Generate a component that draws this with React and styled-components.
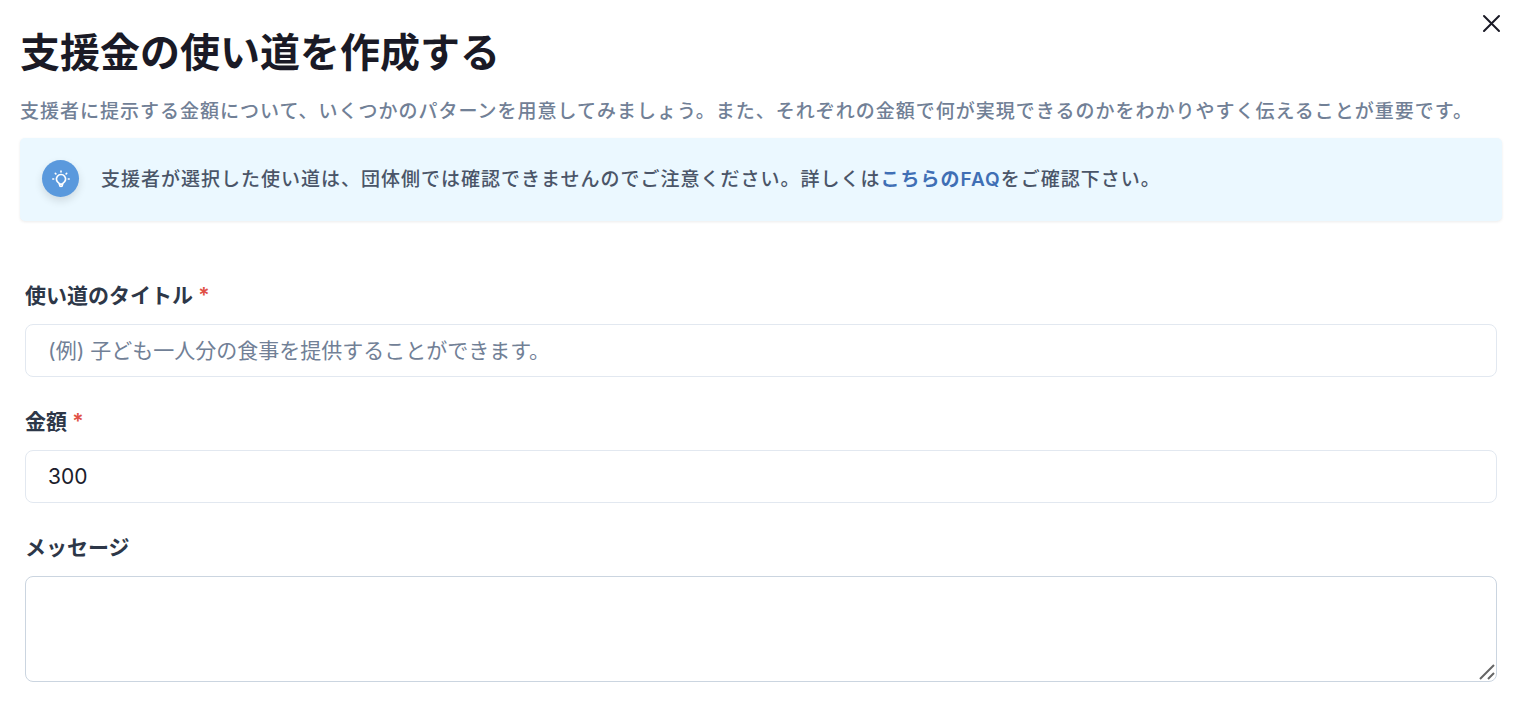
import React, { useState } from 'react';
import styled, { createGlobalStyle } from 'styled-components';

const GlobalStyle = createGlobalStyle`
  *, *::before, *::after {
    box-sizing: border-box;
  }

  body {
    margin: 0;
    background-color: #fff;
    color: #1a202c;
    font-family: Inter, "Noto Sans CJK JP", sans-serif;
  }

  input, textarea, button {
    font-family: inherit;
  }
`

function BulbIcon() {
    return (
        <svg width="20" height="20" viewBox="0 0 24 24" fill="none" stroke="currentColor" strokeWidth="2" strokeLinecap="round" strokeLinejoin="round" aria-hidden="true">
            <path d="M12 2.6v1M5.2 5.2l.6.6M18.8 5.2l-.6.6M2.2 12h1M20.8 12h1" />
            <path d="M9.6 17a5.5 5.5 0 1 1 4.8 0c-.5.6-.7 1.2-.7 2.2a1.7 1.7 0 0 1-3.4 0c0-1-.2-1.6-.7-2.2z" />
            <path d="M10.3 18.2h3.4" />
        </svg>
    )
}

function CloseIcon() {
    return (
        <svg width="19" height="19" viewBox="0 0 19 19" fill="none" stroke="currentColor" strokeWidth="2" strokeLinecap="round" aria-hidden="true">
            <path d="M2 2l15 15M17 2L2 17" />
        </svg>
    )
}

function Field({ id, label, required, children }) {
    return (
        <FieldGroup>
            <Label htmlFor={id}>
                {label}
                {required && <Required> *</Required>}
            </Label>
            {children}
        </FieldGroup>
    )
}

function App() {
    const [title, setTitle] = useState('');
    const [amount, setAmount] = useState('300');
    const [message, setMessage] = useState('');

    return (
        <>
            <GlobalStyle />
            <Page>
                <Header>
                    <Title>支援金の使い道を作成する</Title>
                    <CloseButton type="button" aria-label="閉じる">
                        <CloseIcon />
                    </CloseButton>
                </Header>
                <Description>
                    支援者に提示する金額について、いくつかのパターンを用意してみましょう。また、それぞれの金額で何が実現できるのかをわかりやすく伝えることが重要です。
                </Description>
                <Notice>
                    <NoticeIcon>
                        <BulbIcon />
                    </NoticeIcon>
                    <NoticeText>
                        支援者が選択した使い道は、団体側では確認できませんのでご注意ください。詳しくは<FaqLink href="#faq">こちらのFAQ</FaqLink>をご確認下さい。
                    </NoticeText>
                </Notice>
                <Form>
                    <Field id="title" label="使い道のタイトル" required>
                        <Input
                            id="title"
                            type="text"
                            placeholder="(例) 子ども一人分の食事を提供することができます。"
                            value={title}
                            onChange={(e) => setTitle(e.target.value)}
                        />
                    </Field>
                    <Field id="amount" label="金額" required>
                        <Input
                            id="amount"
                            type="text"
                            inputMode="numeric"
                            value={amount}
                            onChange={(e) => setAmount(e.target.value)}
                        />
                    </Field>
                    <Field id="message" label="メッセージ">
                        <TextAreaWrapper>
                            <TextArea
                                id="message"
                                value={message}
                                onChange={(e) => setMessage(e.target.value)}
                            />
                            <ResizeGrip viewBox="0 0 16 16" aria-hidden="true">
                                <path d="M1 15L15 1M9 15l6-6" />
                            </ResizeGrip>
                        </TextAreaWrapper>
                    </Field>
                </Form>
            </Page>
        </>
    )
}

const Page = styled.main`
  padding: 12px 22px 24px 20px;
`

const Header = styled.header`
  display: flex;
  align-items: flex-start;
  justify-content: space-between;
`

const Title = styled.h1`
  margin: 11px 0 0;
  font-size: 40px;
  font-weight: 700;
  line-height: 60px;
  color: #1a1a26;
`

const CloseButton = styled.button`
  display: flex;
  padding: 2px 1px;
  border: 0;
  background: none;
  color: #1a1a26;
  cursor: pointer;
`

const Description = styled.p`
  margin: 14px 0 12px;
  font-size: 19px;
  font-weight: 500;
  line-height: 29px;
  letter-spacing: 1px;
  color: #718096;
`

const Notice = styled.div`
  display: flex;
  align-items: flex-start;
  gap: 22px;
  padding: 22px;
  border-radius: 5px;
  background-color: #ebf8ff;
  box-shadow: 0 1px 3px 0 rgba(0, 0, 0, 0.08);
`

const NoticeIcon = styled.span`
  display: flex;
  flex-shrink: 0;
  align-items: center;
  justify-content: center;
  width: 37px;
  height: 37px;
  border-radius: 50%;
  background-color: #5a99dd;
  color: #fff;
  box-shadow: 0 4px 8px rgba(0, 0, 0, 0.12);
`

const NoticeText = styled.p`
  margin: 0;
  font-size: 19px;
  font-weight: 500;
  line-height: 39px;
  letter-spacing: 1px;
  color: #4a5568;
`

const FaqLink = styled.a`
  color: #3f6fb5;
  font-weight: 600;
  text-decoration: none;
`

const Form = styled.form`
  display: flex;
  flex-direction: column;
  gap: 29px;
  padding: 59px 5px 0;
`

const FieldGroup = styled.div`
  display: flex;
  flex-direction: column;
  gap: 12px;
`

const Label = styled.label`
  font-size: 21px;
  font-weight: 600;
  line-height: 32px;
  color: #2d3748;
`

const Required = styled.span`
  color: #e05044;
`

const Input = styled.input`
  width: 100%;
  height: 53px;
  padding: 0 22px;
  border: 1px solid #e2e8f0;
  border-radius: 8px;
  background-color: #fff;
  font-size: 21px;
  color: #1a202c;

  &::placeholder {
    color: #718096;
    opacity: 1;
  }
`

const TextAreaWrapper = styled.div`
  position: relative;
  display: flex;
`

const TextArea = styled.textarea`
  width: 100%;
  height: 106px;
  padding: 10px 22px;
  border: 1px solid #cbd5e0;
  border-radius: 8px;
  background-color: #fff;
  font-size: 21px;
  line-height: 32px;
  color: #1a202c;
  resize: vertical;

  &::-webkit-resizer {
    background: transparent;
  }
`

const ResizeGrip = styled.svg`
  position: absolute;
  right: 2px;
  bottom: 2px;
  width: 16px;
  height: 16px;
  fill: none;
  stroke: #666;
  stroke-width: 2;
  pointer-events: none;
`

export default App;
